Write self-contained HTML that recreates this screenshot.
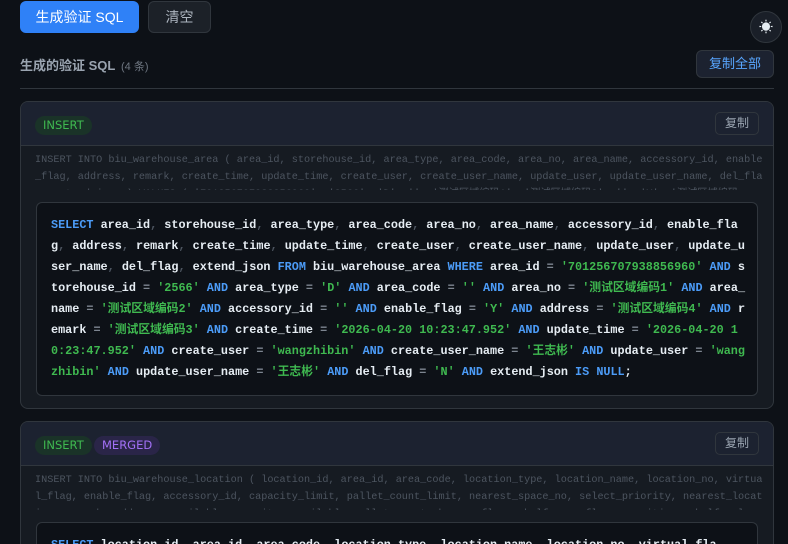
<!DOCTYPE html>
<html><head><meta charset="utf-8"><style>
*{box-sizing:border-box;margin:0;padding:0}
html,body{width:788px;height:544px;overflow:hidden}
body{background:#0d1117;font-family:"Liberation Sans","Noto Sans CJK SC",sans-serif;position:relative;color:#e6edf3}
.btn1{position:absolute;left:20px;top:1px;width:119px;height:32px;background:#2f81f7;border-radius:6px;color:#fff;font-size:14px;line-height:32px;text-align:center}
.btn2{position:absolute;left:148px;top:1px;width:63px;height:32px;background:#1c2128;border:1px solid #30363d;border-radius:6px;color:#adb5bf;font-size:14px;line-height:30px;text-align:center}
.theme{position:absolute;left:750px;top:11px;width:32px;height:32px;border-radius:50%;background:#1a1f28;border:1px solid #30363d;color:#e6edf3;font-size:14px;line-height:30px;text-align:center}
.title{position:absolute;left:20px;top:55px;font-size:13px;font-weight:bold;color:#9aa4b0}
.cnt{position:absolute;left:121px;top:58px;font-size:11px;color:#6e7681}
.copyall{position:absolute;left:696px;top:50px;width:78px;height:28px;background:#1c2230;border:1px solid #30363d;border-radius:6px;color:#58a6ff;font-size:13px;line-height:26px;text-align:center}
.hr{position:absolute;left:20px;top:88px;width:754px;height:1px;background:#30363d}
.card{position:absolute;left:20px;width:754px;border:1px solid #30363d;border-radius:8px;background:#161b22;overflow:hidden}
.hd{height:44px;background:#1c2230;border-bottom:1px solid #30363d;position:relative}
.badge{position:absolute;top:14px;height:19px;border-radius:10px;font-size:12px;line-height:19px;padding:0 8px;font-family:"DejaVu Sans","Liberation Sans",sans-serif;font-size:11.5px}
.ins{background:#1a3328;color:#3fb950}
.mer{background:#2a2548;color:#a371f7}
.cp{position:absolute;right:14px;top:10px;width:44px;height:23px;border:1px solid #30363d;border-radius:5px;color:#9aa4b0;font-size:12px;line-height:21px;text-align:center;background:#1c2230}
.raw{margin:6px 0 0 14px;height:38px;overflow:hidden;font-family:"Liberation Mono","Noto Sans CJK SC",monospace;font-size:10.2px;line-height:17px;color:#4d5560;white-space:pre}
.code{margin:12px 15px 13px 15px;background:#0d1117;border:1px solid #30363d;border-radius:6px;padding:12px 0 12px 14px;font-family:"Liberation Mono","Noto Sans CJK SC",monospace;font-size:11.8px;font-weight:bold;line-height:21px;white-space:pre;color:#e6edf3}
.k{color:#4c9cf8}.s{color:#3fb950}.p{color:#4d5560}.o{color:#7d8590}
</style></head><body>
<div class="btn1">生成验证 SQL</div>
<div class="btn2">清空</div>
<div class="theme">☀</div>
<div class="title">生成的验证 SQL</div>
<div class="cnt">(4 条)</div>
<div class="copyall">复制全部</div>
<div class="hr"></div>

<div class="card" style="top:101px;height:308px">
<div class="hd"><span class="badge ins" style="left:14px">INSERT</span><span class="cp">复制</span></div>
<div class="raw">INSERT INTO biu_warehouse_area ( area_id, storehouse_id, area_type, area_code, area_no, area_name, accessory_id, enable
_flag, address, remark, create_time, update_time, create_user, create_user_name, update_user, update_user_name, del_fla
g, extend_json ) VALUES ( '701256707938856960', '2566', 'D', '', '测试区域编码1', '测试区域编码2', '', 'Y', '测试区域编码</div>
<div class="code"><span class="k">SELECT</span> area_id<span class="p">,</span> storehouse_id<span class="p">,</span> area_type<span class="p">,</span> area_code<span class="p">,</span> area_no<span class="p">,</span> area_name<span class="p">,</span> accessory_id<span class="p">,</span> enable_fla
g<span class="p">,</span> address<span class="p">,</span> remark<span class="p">,</span> create_time<span class="p">,</span> update_time<span class="p">,</span> create_user<span class="p">,</span> create_user_name<span class="p">,</span> update_user<span class="p">,</span> update_u
ser_name<span class="p">,</span> del_flag<span class="p">,</span> extend_json <span class="k">FROM</span> biu_warehouse_area <span class="k">WHERE</span> area_id <span class="o">=</span> <span class="s">'701256707938856960'</span> <span class="k">AND</span> s
torehouse_id <span class="o">=</span> <span class="s">'2566'</span> <span class="k">AND</span> area_type <span class="o">=</span> <span class="s">'D'</span> <span class="k">AND</span> area_code <span class="o">=</span> <span class="s">''</span> <span class="k">AND</span> area_no <span class="o">=</span> <span class="s">'测试区域编码1'</span> <span class="k">AND</span> area_
name <span class="o">=</span> <span class="s">'测试区域编码2'</span> <span class="k">AND</span> accessory_id <span class="o">=</span> <span class="s">''</span> <span class="k">AND</span> enable_flag <span class="o">=</span> <span class="s">'Y'</span> <span class="k">AND</span> address <span class="o">=</span> <span class="s">'测试区域编码4'</span> <span class="k">AND</span> r
emark <span class="o">=</span> <span class="s">'测试区域编码3'</span> <span class="k">AND</span> create_time <span class="o">=</span> <span class="s">'2026-04-20 10:23:47.952'</span> <span class="k">AND</span> update_time <span class="o">=</span> <span class="s">'2026-04-20 1
0:23:47.952'</span> <span class="k">AND</span> create_user <span class="o">=</span> <span class="s">'wangzhibin'</span> <span class="k">AND</span> create_user_name <span class="o">=</span> <span class="s">'王志彬'</span> <span class="k">AND</span> update_user <span class="o">=</span> <span class="s">'wang
zhibin'</span> <span class="k">AND</span> update_user_name <span class="o">=</span> <span class="s">'王志彬'</span> <span class="k">AND</span> del_flag <span class="o">=</span> <span class="s">'N'</span> <span class="k">AND</span> extend_json <span class="k">IS</span> <span class="k">NULL</span>;</div>
</div>

<div class="card" style="top:421px;height:140px">
<div class="hd"><span class="badge ins" style="left:14px">INSERT</span><span class="badge mer" style="left:73px">MERGED</span><span class="cp">复制</span></div>
<div class="raw">INSERT INTO biu_warehouse_location ( location_id, area_id, area_code, location_type, location_name, location_no, virtua
l_flag, enable_flag, accessory_id, capacity_limit, pallet_count_limit, nearest_space_no, select_priority, nearest_locat
ion, remark, address, available_capacity, available_pallet_count, borrow_flag, shelf_row, floor, position, shelf_colum</div>
<div class="code"><span class="k">SELECT</span> location_id<span class="p">,</span> area_id<span class="p">,</span> area_code<span class="p">,</span> location_type<span class="p">,</span> location_name<span class="p">,</span> location_no<span class="p">,</span> virtual_fla</div>
</div>
</body></html>
